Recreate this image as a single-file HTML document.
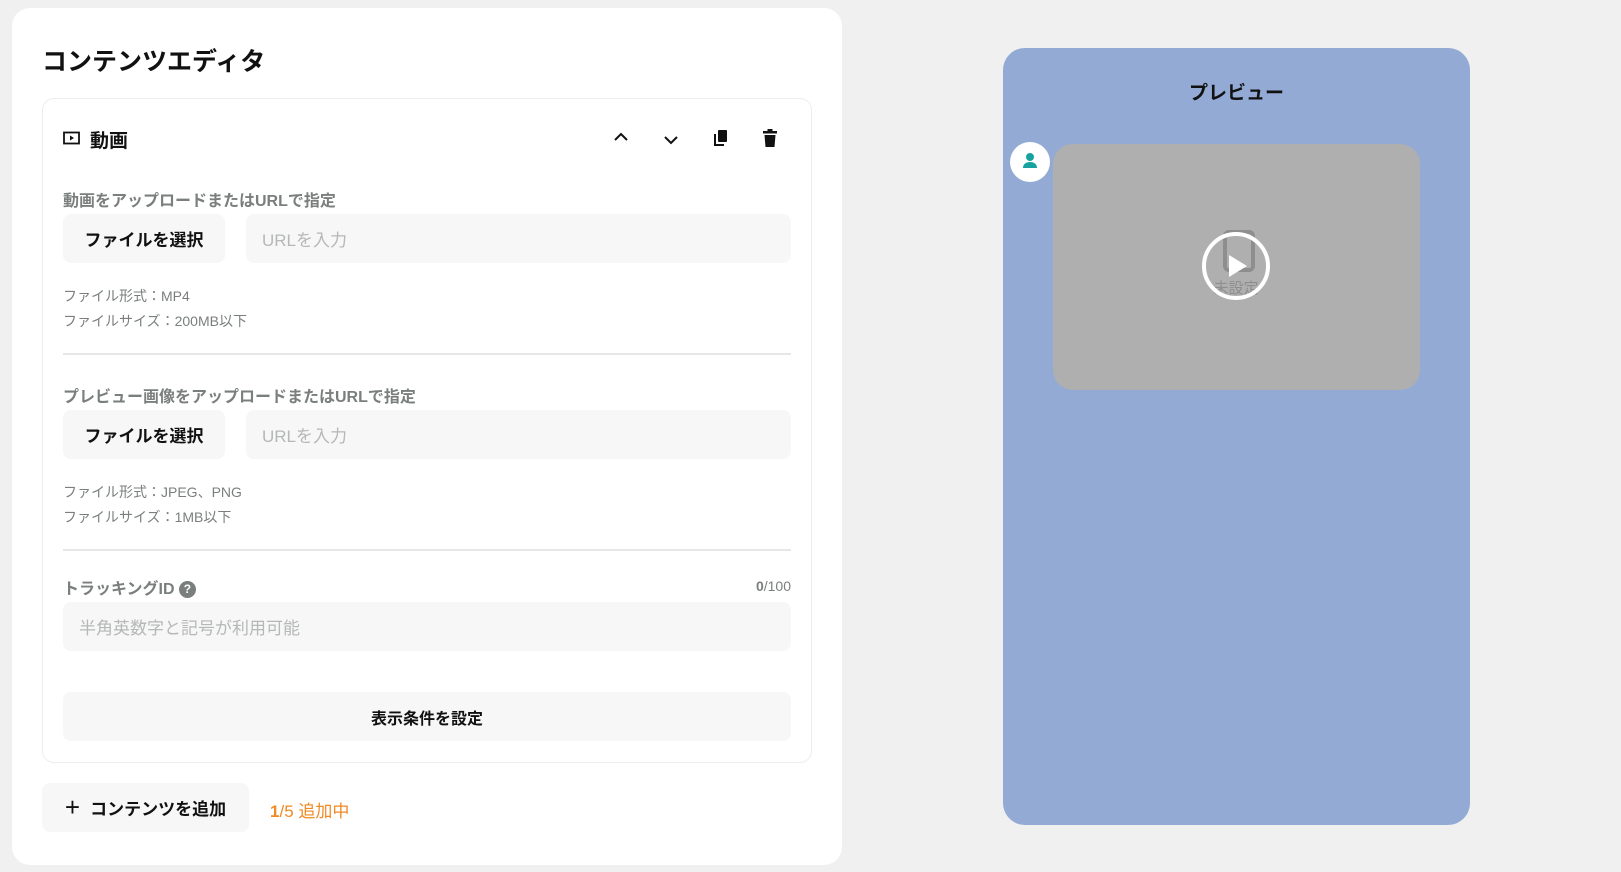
<!DOCTYPE html>
<html><head><meta charset="utf-8"><style>
*{box-sizing:border-box;margin:0;padding:0}
body{width:1621px;height:872px;background:#eff0ef;font-family:"Liberation Sans","Noto Sans CJK JP",sans-serif;position:relative;overflow:hidden;color:#111}
.a{position:absolute}
.card{left:12px;top:8px;width:830px;height:857px;background:#fff;border-radius:18px}
.inner{left:42px;top:98px;width:770px;height:665px;border:1px solid #eceeed;border-radius:12px;background:#fff}
.lbl{font-size:16px;font-weight:bold;color:#7a7f7d}
.btn{background:#f6f7f6;border-radius:8px;font-weight:bold;font-size:17px;display:flex;align-items:center;justify-content:center}
.inp{background:#f6f7f6;border-radius:8px;font-size:17px;color:#b5b8b7;display:flex;align-items:center;padding-left:16px}
.hint{font-size:14px;color:#7a7f7d;line-height:25px}
.div{height:2px;background:#e6e8e7;left:63px;width:728px}
</style></head><body>
<div class="a card"></div>
<div class="a" style="left:42px;top:42px;font-size:25px;font-weight:bold">コンテンツエディタ</div>
<div class="a inner"></div>
<svg class="a" style="left:63px;top:131px" width="17" height="14" viewBox="0 0 17 14"><rect x="1" y="1.5" width="15" height="11" fill="none" stroke="#111" stroke-width="1.8"/><path d="M7 4.5l4 2.5-4 2.5z" fill="#111"/></svg>
<div class="a" style="left:90px;top:126px;font-size:19px;font-weight:bold">動画</div>
<svg class="a" style="left:612px;top:130px" width="18" height="14" viewBox="0 0 18 14"><path d="M3 10l6-6 6 6" fill="none" stroke="#111" stroke-width="2"/></svg>
<svg class="a" style="left:662px;top:133px" width="18" height="14" viewBox="0 0 18 14"><path d="M3 4l6 6 6-6" fill="none" stroke="#111" stroke-width="2"/></svg>
<svg class="a" style="left:712px;top:129px" width="18" height="20" viewBox="0 0 18 20"><rect x="6" y="1" width="9" height="12" rx="1" fill="#111"/><path d="M3 5v11h9" fill="none" stroke="#111" stroke-width="2"/></svg>
<svg class="a" style="left:762px;top:129px" width="16" height="19" viewBox="0 0 16 19"><rect x="1" y="2" width="14" height="2.5" fill="#111"/><rect x="5.5" y="0" width="5" height="3" fill="#111"/><path d="M2.5 6h11l-1 12h-9z" fill="#111"/></svg>

<div class="a lbl" style="left:63px;top:187px">動画をアップロードまたはURLで指定</div>
<div class="a btn" style="left:63px;top:214px;width:162px;height:49px">ファイルを選択</div>
<div class="a inp" style="left:246px;top:214px;width:545px;height:49px">URLを入力</div>
<div class="a hint" style="left:63px;top:284px">ファイル形式：MP4<br>ファイルサイズ：200MB以下</div>
<div class="a div" style="top:353px"></div>

<div class="a lbl" style="left:63px;top:383px">プレビュー画像をアップロードまたはURLで指定</div>
<div class="a btn" style="left:63px;top:410px;width:162px;height:49px">ファイルを選択</div>
<div class="a inp" style="left:246px;top:410px;width:545px;height:49px">URLを入力</div>
<div class="a hint" style="left:63px;top:480px">ファイル形式：JPEG、PNG<br>ファイルサイズ：1MB以下</div>
<div class="a div" style="top:549px"></div>

<div class="a lbl" style="left:63px;top:575px">トラッキングID <span style="display:inline-block;width:17px;height:17px;border-radius:50%;background:#7a7f7d;color:#fff;font-size:12px;text-align:center;line-height:17px;vertical-align:1px">?</span></div>
<div class="a" style="right:830px;top:578px;font-size:14px;color:#7a7f7d"><b>0</b>/100</div>
<div class="a inp" style="left:63px;top:602px;width:728px;height:49px">半角英数字と記号が利用可能</div>
<div class="a btn" style="left:63px;top:692px;width:728px;height:49px;font-size:16px">表示条件を設定</div>

<div class="a btn" style="left:42px;top:783px;width:207px;height:49px;font-size:17px"><span style="font-size:26px;font-weight:normal;margin-right:10px;line-height:1;margin-top:-2px">+</span>コンテンツを追加</div>
<div class="a" style="left:270px;top:797px;font-size:17px;color:#f08a24"><b>1</b>/5 追加中</div>

<div class="a" style="left:1003px;top:48px;width:467px;height:777px;background:#93aad5;border-radius:22px"></div>
<div class="a" style="left:1003px;top:78px;width:467px;text-align:center;font-size:19px;font-weight:bold">プレビュー</div>
<div class="a" style="left:1010px;top:142px;width:40px;height:40px;border-radius:50%;background:#fff"></div>
<svg class="a" style="left:1020px;top:151px" width="20" height="20" viewBox="0 0 20 20"><circle cx="10" cy="6" r="4" fill="#17a2a0"/><path d="M3 17c0-4 3-6 7-6s7 2 7 6z" fill="#17a2a0"/></svg>
<div class="a" style="left:1053px;top:144px;width:367px;height:246px;background:#afafaf;border-radius:20px"></div>
<svg class="a" style="left:1200px;top:230px" width="72" height="72" viewBox="0 0 72 72"><rect x="25" y="2" width="28" height="38" rx="4" fill="none" stroke="#8e8e8e" stroke-width="4"/><text x="36" y="63" font-size="15" fill="#8e8e8e" text-anchor="middle" font-family="Noto Sans CJK JP,sans-serif">未設定</text><circle cx="36" cy="36" r="32" fill="none" stroke="#fff" stroke-width="4"/><path d="M29 25l18 11-18 11z" fill="#fff"/></svg>
</body></html>
